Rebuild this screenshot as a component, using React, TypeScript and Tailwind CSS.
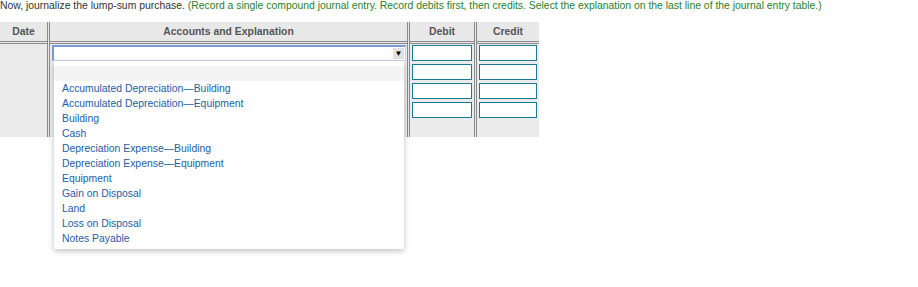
import React from 'react';

const accounts = [
  'Accumulated Depreciation\u2014Building',
  'Accumulated Depreciation\u2014Equipment',
  'Building',
  'Cash',
  'Depreciation Expense\u2014Building',
  'Depreciation Expense\u2014Equipment',
  'Equipment',
  'Gain on Disposal',
  'Land',
  'Loss on Disposal',
  'Notes Payable',
];

// Double rule between columns
function VRule() {
  return <div className="w-[3px] border-x border-[#8a8a8a] bg-[#e8e8e8]" />;
}

function AmountInputs({ width }: { width: string }) {
  return (
    <div className="flex flex-col gap-[3px] pt-[1px] pl-[2px]">
      {[0, 1, 2, 3].map((i) => (
        <div key={i} className={`${width} h-[16px] border border-[#1a7a94] bg-white`} />
      ))}
    </div>
  );
}

export default function App() {
  return (
    <div
      className="w-[918px] h-[287px] bg-white text-[10.4px] leading-[12px]"
      style={{ fontFamily: '"Liberation Sans", Arial, sans-serif' }}
    >
      <p className="text-[#333]">
        Now, journalize the lump-sum purchase.{' '}
        <span className="text-[#1f7f2a]">
          (Record a single compound journal entry. Record debits first, then credits. Select the explanation on the last line of the journal entry table.)
        </span>
      </p>

      <div className="relative mt-[10px] w-[539px]">
        {/* header */}
        <div className="flex h-[19px] bg-[#e8e8e8] font-bold text-[#555]">
          <div className="w-[47px] flex items-center justify-center">Date</div>
          <VRule />
          <div className="w-[357px] flex items-center justify-center">Accounts and Explanation</div>
          <VRule />
          <div className="w-[64px] flex items-center justify-center">Debit</div>
          <VRule />
          <div className="w-[62px] flex items-center justify-center">Credit</div>
        </div>
        <div className="flex h-[3px] bg-[#e8e8e8]">
          <div className="w-[47px] border-y border-[#8a8a8a]" />
          <VRule />
          <div className="w-[357px] border-y border-[#8a8a8a]" />
          <VRule />
          <div className="w-[64px] border-y border-[#8a8a8a]" />
          <VRule />
          <div className="w-[62px] border-y border-[#8a8a8a]" />
        </div>

        {/* body */}
        <div className="flex h-[93px] bg-[#ebebeb]">
          <div className="w-[47px]" />
          <VRule />
          <div className="w-[357px] pt-[1px] pl-[2px]">
            <div className="flex h-[16px] w-[354px] border-t-2 border-l-2 border-[#7d9ad6] border-r border-b border-r-[#c8d4ee] border-b-[#c8d4ee] bg-white">
              <div className="flex-1" />
              <div className="w-[11px] my-[1px] mr-[1px] bg-[#e2e2e2] flex items-center justify-center text-[8px] leading-none text-black">
                ▼
              </div>
            </div>
          </div>
          <VRule />
          <div className="w-[64px]">
            <AmountInputs width="w-[60px]" />
          </div>
          <VRule />
          <div className="w-[62px]">
            <AmountInputs width="w-[58px]" />
          </div>
        </div>

        {/* open dropdown list */}
        <div className="absolute left-[54px] top-[39px] w-[350px] bg-white pt-[5px] pb-[3px] shadow-[0_2px_6px_rgba(0,0,0,0.25)]">
          <div className="h-[15px] bg-[#f4f4f4]" />
          {accounts.map((a) => (
            <div key={a} className="h-[15px] flex items-center pl-[8px] text-[#1f5ca3]">
              {a}
            </div>
          ))}
        </div>
      </div>
    </div>
  );
}
